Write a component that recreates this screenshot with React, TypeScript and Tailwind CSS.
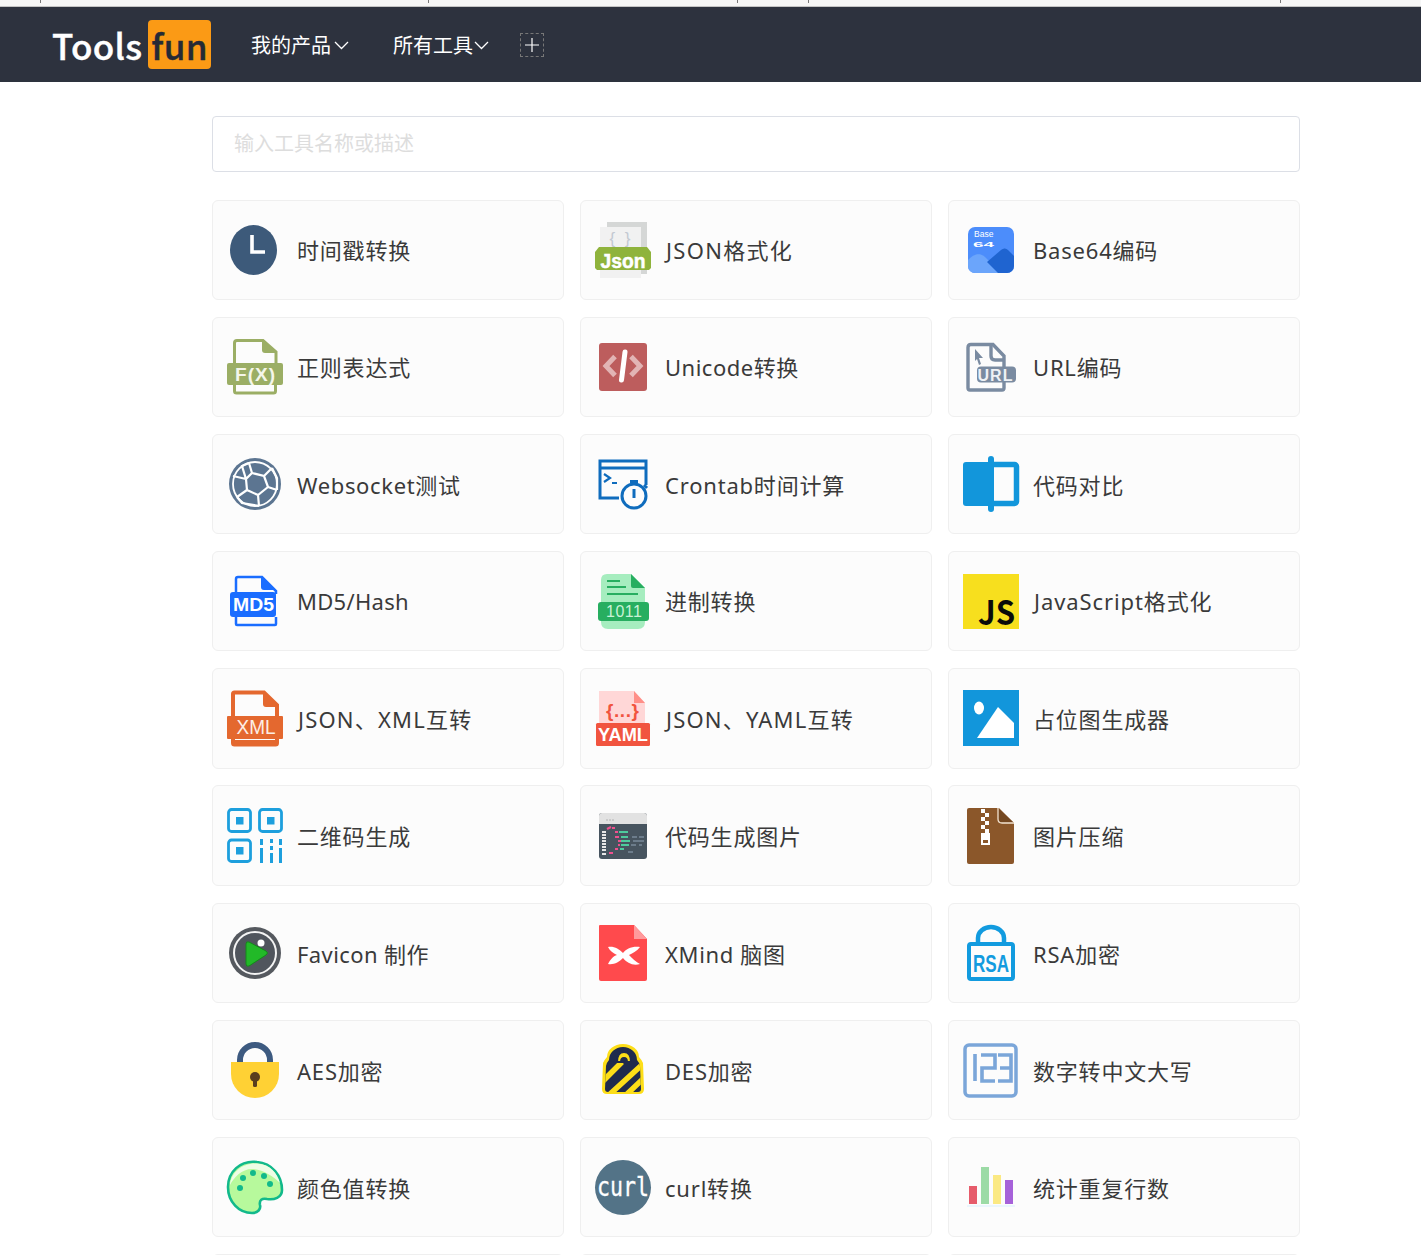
import React from "react";

const FONT = '"Noto Sans","Noto Sans CJK SC",sans-serif';
const Svg = ({ children }: { children: React.ReactNode }) => (
  <svg viewBox="0 0 56 56" width={56} height={56} className="shrink-0 overflow-visible" style={{ fontFamily: '"Liberation Sans",sans-serif' }}>
    {children}
  </svg>
);

const Clock = () => (
  <Svg>
    <ellipse cx="26.5" cy="28" rx="23.5" ry="25" fill="#3d5a7a" />
    <path d="M25 13v17h13" fill="none" stroke="#fff" strokeWidth="3.600" />
  </Svg>
);
const Json = () => (
  <Svg>
    <rect x="12" y="0" width="40" height="52" fill="#d5d7d6" />
    <rect x="5" y="5" width="41" height="51" fill="#f1f1f1" />
    <text x="25" y="22" textAnchor="middle" fontSize="17" fill="#c3c9d2" textLength="21">{"{ }"}</text>
    <path d="M4 25h48l4 5v16l-2 2H2l-2-2V30z" fill="#8fb33c" />
    <text x="28" y="45.500" textAnchor="middle" fontSize="20" fontWeight="700" fill="#fff" stroke="#fff" strokeWidth="0.500" textLength="45" lengthAdjust="spacingAndGlyphs">Json</text>
  </Svg>
);
const Base64 = () => (
  <Svg>
    <defs>
      <clipPath id="b64"><rect x="5" y="5" width="46" height="46" rx="7" /></clipPath>
    </defs>
    <g clipPath="url(#b64)">
      <rect x="5" y="5" width="46" height="46" fill="#4c8dfb" />
      <path d="M5 38c5-6 12-8 17-3l16 16H5z" fill="#6ba5fb" />
      <path d="M24 40l14-12c3-2 5-2 7 0l6 6v17H35z" fill="#1f64d0" />
    </g>
    <text x="11" y="15" fontSize="8.500" fill="#fff">Base</text>
    <text x="10" y="25" fontSize="8" fontWeight="700" fill="#fff" textLength="21" lengthAdjust="spacingAndGlyphs">64</text>
  </Svg>
);
const Regex = () => (
  <Svg>
    <path d="M7.500 24V4q0-2.500 2.500-2.500h26L49 13v11M7.500 46v6q0 2 2 2h37q2 0 2-2v-6" fill="none" stroke="#9bae65" strokeWidth="3" />
    <path d="M35 1v10q0 3 3 3h12z" fill="#9bae65" />
    <rect x="0" y="24" width="56" height="22" rx="2" fill="#9bae65" />
    <text x="28" y="42" textAnchor="middle" fontSize="19" fontWeight="700" fill="#f4f6ea" textLength="40">F(X)</text>
  </Svg>
);
const Unicode = () => (
  <Svg>
    <rect x="4" y="4" width="48" height="48" rx="3" fill="#bd5d5d" />
    <path d="M20 17.500L11 27l9 9.500M36 17.500L45 27l-9 9.500" fill="none" stroke="#e2b4b4" strokeWidth="5" />
    <path d="M30 13l-3.500 28" fill="none" stroke="#fff" strokeWidth="5" strokeLinecap="round" />
  </Svg>
);
const Url = () => (
  <Svg>
    <path d="M41 28V17L30 5.500H8q-3 0-3 3V49q0 2 2 2h32q2 0 2-2v-6" fill="none" stroke="#7a8ba1" strokeWidth="3.400" />
    <path d="M28 5v12q0 4 4 4h9" fill="none" stroke="#7a8ba1" strokeWidth="3.400" />
    <path d="M12 10l8 9-4 0 2 6-2 1-2-6-2 2z" fill="#7a8ba1" />
    <rect x="14" y="27.500" width="39" height="16" rx="4" fill="#7a8ba1" />
    <text x="32" y="42" textAnchor="middle" fontSize="16" fontWeight="700" fill="#eef1f5" textLength="35">URL</text>
  </Svg>
);
const Ws = () => (
  <Svg>
    <circle cx="28" cy="28" r="26" fill="#5c7591" />
    <circle cx="28" cy="28" r="22" fill="none" stroke="#fff" strokeWidth="1.800" />
    <path d="M25 17l12 3 4 11-10 8-11-5-1-11zM25 17l-3-10M37 20l8-8M41 31l9 3M31 39l1 11M20 34l-10 7M19 23l-13-3M22 7l-7 3 4 13M45 12l5 10v12M10 41l5 6 17 3" fill="none" stroke="#fff" strokeWidth="2.200" />
  </Svg>
);
const Cron = () => (
  <Svg>
    <path d="M24 42H5V5h46v24M5 12h46" fill="none" stroke="#0f6cbd" strokeWidth="3" />
    <path d="M9 18l6 4-6 4M17 27h5" fill="none" stroke="#0f6cbd" strokeWidth="2.200" />
    <circle cx="39" cy="40" r="12" fill="#fcfcfc" stroke="#0f6cbd" strokeWidth="3" />
    <path d="M35 25.500h8M39 25v3M39 33v9M49 29l3 3" fill="none" stroke="#0f6cbd" strokeWidth="3" />
  </Svg>
);
const Compare = () => (
  <Svg>
    <path d="M3 6h25v44H3q-3 0-3-3V9q0-3 3-3z" fill="#1296db" />
    <rect x="28" y="8.500" width="25.500" height="39" fill="none" stroke="#1296db" strokeWidth="5.500" rx="2" />
    <rect x="25" y="0" width="6" height="56" rx="3" fill="#1296db" />
  </Svg>
);
const Md5 = () => (
  <Svg>
    <g transform="translate(3,0)">
      <path d="M6 20V6q0-2 2-2h24l14 14v3M6 44v7q0 1 1 1h38q1 0 1-1v-7" fill="none" stroke="#1a6dff" strokeWidth="2.500" />
      <path d="M31 4v10q0 3 3 3h12z" fill="#1a6dff" />
      <rect x="0" y="19" width="46" height="25" rx="3" fill="#1a6dff" />
      <text x="23.500" y="38" textAnchor="middle" fontSize="18" fontWeight="700" fill="#fff" textLength="41" lengthAdjust="spacingAndGlyphs">MD5</text>
    </g>
  </Svg>
);
const Bin = () => (
  <Svg>
    <path d="M12 1h24l14 14v34q0 7-7 7H13q-7 0-7-7V7q0-6 6-6z" fill="#a6edbf" />
    <path d="M36 1l14 14H38q-2 0-2-2z" fill="#27ae60" />
    <path d="M12 8h13M12 14h19M12 21h31" stroke="#27ae60" strokeWidth="2" fill="none" />
    <rect x="3" y="29" width="51" height="19" rx="3" fill="#27ae60" />
    <text x="29" y="44" textAnchor="middle" fontSize="16" fill="#c8f2d6" textLength="36">1011</text>
  </Svg>
);
const Js = () => (
  <Svg>
    <rect x="0" y="1" width="56" height="55" fill="#f7df1e" />
    <text x="15" y="52" fontSize="34" fontWeight="700" fill="#0a0a0a" textLength="37" lengthAdjust="spacingAndGlyphs" style={{ fontFamily: '"Noto Sans CJK SC",sans-serif' }}>JS</text>
  </Svg>
);
const Xml = () => (
  <Svg>
    <path d="M6 26V4q0-1.500 1.500-1.500H37L50 15v11M6 48v5q0 1.500 1.500 1.500h41q1.500 0 1.500-1.500v-5" fill="none" stroke="#e4682f" strokeWidth="4" />
    <path d="M36 2v12q0 3 3 3h13z" fill="#e4682f" />
    <rect x="0" y="26" width="56" height="23" rx="1" fill="#e4682f" />
    <path d="M6 50h44v3H6z" fill="#e4682f" />
    <text x="29" y="44" textAnchor="middle" fontSize="20" fill="#fdeee5" textLength="39" lengthAdjust="spacingAndGlyphs">XML</text>
  </Svg>
);
const Yaml = () => (
  <Svg>
    <path d="M4 1h35l11 12v21H4z" fill="#ffd7d7" />
    <path d="M39 1l11 12H39z" fill="#ff8f88" />
    <text x="27.500" y="27" textAnchor="middle" fontSize="19" fontWeight="700" fill="#f1543f" textLength="33">{"{...}"}</text>
    <rect x="1" y="33" width="54" height="23" rx="1.500" fill="#f1543f" />
    <text x="28" y="51" textAnchor="middle" fontSize="19" fontWeight="700" fill="#fff" textLength="50" lengthAdjust="spacingAndGlyphs">YAML</text>
  </Svg>
);
const Placeholder = () => (
  <Svg>
    <rect x="0" y="0" width="56" height="56" fill="#1296db" />
    <ellipse cx="16" cy="18" rx="5" ry="6.500" fill="#fff" />
    <path d="M14 48l21-31 16 16v15z" fill="#fff" />
  </Svg>
);
const Qr = () => (
  <Svg>
    <g fill="none" stroke="#1d9fdd" strokeWidth="2.800">
      <rect x="1.500" y="1.500" width="22" height="22" rx="3" />
      <rect x="32.500" y="1.500" width="22" height="22" rx="3" />
      <rect x="1.500" y="32" width="22" height="21.500" rx="3" />
    </g>
    <g fill="#1d9fdd">
      <rect x="9" y="9" width="7.500" height="7.500" />
      <rect x="40" y="9" width="7.500" height="7.500" />
      <rect x="9" y="39" width="7.500" height="7.500" />
      <path d="M33 31h3v6h-3zM33 40h3v15h-3zM43 31h3v4h-3zM43 38h3v4h-3zM43 45h3v10h-3zM52 31h3v6h-3zM52 40h3v15h-3z" />
    </g>
  </Svg>
);
const CodeImg = () => (
  <Svg>
    <rect x="4" y="5" width="48" height="46" rx="3" fill="#47545f" />
    <path d="M4 16V8q0-3 3-3h42q3 0 3 3v8z" fill="#e2e2e2" />
    <path d="M11 12h2M14 12h2M17 12h2" stroke="#c4c4c4" strokeWidth="1.500" />
    <path d="M7 24h4M7 27h4M7 30h4M7 33h4M7 36h4M7 39h4M7 42h4M7 46h4" stroke="#e6e6e6" strokeWidth="1.800" />
    <path d="M12 21l4-2M17 20h3M20 24h3M20 29h4M23 33h3M23 37h2M20 41h3M14 45h4" stroke="#f0518f" strokeWidth="2" />
    <path d="M24 24h9M26 29h7M26 33h9M26 37h8M25 41h4" stroke="#4ecb9d" strokeWidth="2" />
    <path d="M37 29h5M44 29h5M38 33h11M36 37h5M44 37h3M33 44h5" stroke="#6c7c8b" strokeWidth="1.800" />
  </Svg>
);
const Zip = () => (
  <Svg>
    <path d="M6 0h30l15 15v39q0 2-2 2H6q-2 0-2-2V2q0-2 2-2z" fill="#8b572a" />
    <path d="M35 0v11q0 4 4 4h12" fill="#744720" stroke="#f3e3d0" strokeWidth="1.300" />
    <path d="M18 1h4v4h-4zM22 5h4v4h-4zM18 9h4v4h-4zM22 13h4v4h-4zM18 17h4v4h-4zM22 21h4v4h-4z" fill="#fff" />
    <rect x="18" y="25" width="9" height="12" fill="#fff" />
    <rect x="20" y="32" width="5" height="3" fill="#8b572a" />
  </Svg>
);
const Favicon = () => (
  <Svg>
    <circle cx="28" cy="28" r="26" fill="#55595f" />
    <circle cx="28" cy="28" r="21" fill="#50555d" stroke="#f4f4f4" strokeWidth="2" />
    <path d="M19 19q0-3 3-2l17 9q3 2 0 4L22 41q-3 1-3-2z" fill="#22b928" stroke="#148a1a" strokeWidth="1" />
    <circle cx="34" cy="18" r="3.500" fill="#fff" />
  </Svg>
);
const XMind = () => (
  <Svg>
    <path d="M5 0h34l13 14v40q0 2-2 2H6q-2 0-2-2V1q0-1 1-1z" fill="#ff4a4d" />
    <path d="M39 0l13 14H39z" fill="#ff9a9c" />
    <path d="M13 22c6-1 11 2 15 6 3-4 9-7 17-6-3 4-7 6-11 8 3 3 7 7 11 9-7 2-13-1-17-6-4 4-9 7-15 6 2-4 5-8 9-9-4-2-7-4-9-8z" fill="#fff" />
  </Svg>
);
const Rsa = () => (
  <Svg>
    <path d="M15 17v-4a13 11 0 0 1 26 0v4" fill="none" stroke="#129bdf" strokeWidth="4.500" />
    <rect x="6" y="19" width="44" height="35" rx="2" fill="#fcfcfc" stroke="#129bdf" strokeWidth="4" />
    <text x="28" y="47" textAnchor="middle" fontSize="23" fontWeight="700" fill="#129bdf" textLength="36" lengthAdjust="spacingAndGlyphs">RSA</text>
  </Svg>
);
const Aes = () => (
  <Svg>
    <path d="M13 22v-4a15 15 0 0 1 30 0v4" fill="none" stroke="#3d5a80" strokeWidth="6" />
    <path d="M4 20h48v12a24 24 0 0 1-24 24A24 24 0 0 1 4 32z" fill="#ffd134" />
    <circle cx="28" cy="35" r="5" fill="#5b3e1e" />
    <rect x="26" y="35" width="4" height="10" rx="1.500" fill="#5b3e1e" />
  </Svg>
);
const Des = () => (
  <Svg>
    <defs>
      <clipPath id="desb"><path d="M11 24q1-4 3-6a14 13 0 0 1 28 0q2 2 3 6l1 23q0 3-3 3H13q-3 0-3-3z" /></clipPath>
    </defs>
    <path d="M8 21q2-4 4-6a16 13 0 0 1 32 0q2 2 4 6l1 26q0 5-5 5H12q-5 0-5-5z" fill="#fdde18" />
    <path d="M11 24q1-4 3-6a14 13 0 0 1 28 0q2 2 3 6l1 23q0 3-3 3H13q-3 0-3-3z" fill="#202b4d" />
    <g clipPath="url(#desb)" stroke="#fdde18" strokeWidth="5.500" fill="none">
      <path d="M6 41L27 20M14 53L48 22M31 53L52 33" />
    </g>
    <path d="M22 20q0-10 7-10t7 10z" fill="#fdde18" stroke="#202b4d" strokeWidth="2" />
    <path d="M25 20q0-5 4-5t4 5z" fill="#202b4d" />
  </Svg>
);
const Num = () => (
  <Svg>
    <rect x="2" y="3" width="51" height="51" rx="4" fill="none" stroke="#7ba6d9" strokeWidth="3.500" />
    <path d="M12 12v27M18 13h14v13H19v13h13M35 13h13v26H35M37 26h11" fill="none" stroke="#7ba6d9" strokeWidth="3.600" />
  </Svg>
);
const Palette = () => (
  <Svg>
    <path d="M30 3C13 1 1 13 1 28c0 15 11 26 24 26 6 0 9-4 8-8-1-5 2-7 7-6 7 1 15-1 15-9C55 17 45 4 30 3z" fill="#b7f99c" stroke="#12b98b" strokeWidth="2.600" />
    <path d="M30 4.500C16 3.500 4 13 3 26c4-8 12-16 22-16 10 0 22 8 28 14C50 14 44 5.500 30 4.500z" fill="#eefde5" />
    <g fill="#12b98b">
      <circle cx="16" cy="19" r="3" /><circle cx="13" cy="29" r="3" /><circle cx="26" cy="14" r="3" /><circle cx="37" cy="17" r="3" /><circle cx="43" cy="25" r="3" />
    </g>
  </Svg>
);
const Curl = () => (
  <Svg>
    <ellipse cx="28" cy="28.500" rx="28" ry="27.500" fill="#537387" />
    <text x="28" y="37" textAnchor="middle" fontSize="27" fill="#fff" stroke="#fff" strokeWidth="0.300" textLength="52" lengthAdjust="spacingAndGlyphs" style={{ fontFamily: '"DejaVu Sans Mono",monospace' }}>curl</text>
  </Svg>
);
const Chart = () => (
  <Svg>
    <rect x="4" y="46" width="48" height="2" fill="#eaf6fd" />
    <rect x="6" y="27" width="8" height="18" fill="#e65c6b" />
    <rect x="18" y="8" width="8" height="37" fill="#9cdba6" />
    <rect x="30" y="16" width="8" height="29" fill="#fbe983" />
    <rect x="42" y="21" width="8" height="24" fill="#a661d9" />
  </Svg>
);

type Tool = { label: string; Icon: () => React.ReactElement; cls?: string };
const BASE = "tracking-[0.8px]";
const tools: Tool[] = [
  { label: "时间戳转换", Icon: Clock },
  { label: "JSON格式化", Icon: Json, cls: "tracking-[1.300px] pl-[1px]" },
  { label: "Base64编码", Icon: Base64 },
  { label: "正则表达式", Icon: Regex },
  { label: "Unicode转换", Icon: Unicode, cls: "tracking-[0.500px]" },
  { label: "URL编码", Icon: Url },
  { label: "Websocket测试", Icon: Ws, cls: "tracking-[0.650px]" },
  { label: "Crontab时间计算", Icon: Cron },
  { label: "代码对比", Icon: Compare },
  { label: "MD5/Hash", Icon: Md5, cls: "tracking-[0.300px]" },
  { label: "进制转换", Icon: Bin },
  { label: "JavaScript格式化", Icon: Js, cls: "tracking-[0.900px] pl-[1px]" },
  { label: "JSON、XML互转", Icon: Xml, cls: "tracking-[1.200px] pl-[1px]" },
  { label: "JSON、YAML互转", Icon: Yaml, cls: "tracking-[1.200px] pl-[1px]" },
  { label: "占位图生成器", Icon: Placeholder },
  { label: "二维码生成", Icon: Qr },
  { label: "代码生成图片", Icon: CodeImg },
  { label: "图片压缩", Icon: Zip },
  { label: "Favicon 制作", Icon: Favicon, cls: "tracking-[0.400px]" },
  { label: "XMind 脑图", Icon: XMind, cls: "tracking-[0.650px]" },
  { label: "RSA加密", Icon: Rsa },
  { label: "AES加密", Icon: Aes },
  { label: "DES加密", Icon: Des },
  { label: "数字转中文大写", Icon: Num },
  { label: "颜色值转换", Icon: Palette },
  { label: "curl转换", Icon: Curl },
  { label: "统计重复行数", Icon: Chart },
];

const rowOffset = [
  "mt-[1.500px]", "mt-[1.500px]", "mt-[1.500px]", "mt-[0.500px]", "mt-[1.500px]",
  "mt-[1.500px]", "mt-[3px]", "mt-[3px]", "mt-[3px]",
];

const Chevron = () => (
  <svg width="15" height="9" viewBox="0 0 15 9" className="ml-[3px] mt-[1px]">
    <path d="M1 1l6.500 6.500L14 1" fill="none" stroke="#fff" strokeWidth="1.300" />
  </svg>
);

export default function App() {
  return (
    <div className="relative h-[1255px] overflow-hidden bg-white" style={{ fontFamily: FONT }}>
      <div className="relative h-[7px] border-b border-[#c4c4c4] bg-[#f6f6f6]">
        <span className="absolute left-[40px] top-0 h-[3px] w-px bg-[#777]" />
        <span className="absolute left-[428px] top-0 h-[3px] w-px bg-[#777]" />
        <span className="absolute left-[737px] top-0 h-[3px] w-px bg-[#777]" />
        <span className="absolute left-[808px] top-0 h-[3px] w-px bg-[#777]" />
        <span className="absolute left-[1280px] top-0 h-[3px] w-px bg-[#777]" />
      </div>
      <header className="flex h-[75px] items-center bg-[#2d323e] pl-[52px] text-white">
        <div className="flex items-center text-[35px] font-medium leading-none tracking-[0.300px] [-webkit-text-stroke:0.4px]" style={{ fontFamily: '"Noto Sans CJK SC",sans-serif' }}>
          <span className="w-[90px] whitespace-nowrap">Tools</span>
          <span className="ml-[6px] flex h-[49px] w-[63px] items-center justify-center rounded-[4px] bg-[#fb9a15] text-[#252a35]">fun</span>
        </div>
        <nav className="ml-[40px] flex items-center text-[20px] leading-none">
          <span className="mt-[2px]">我的产品</span>
          <Chevron />
          <span className="ml-[44px] mt-[2px]">所有工具</span>
          <span className="-ml-[2px] flex"><Chevron /></span>
          <span className="ml-[31px] flex h-[24px] w-[24px] items-center justify-center border border-dashed border-[#777]">
            <svg width="14" height="14" viewBox="0 0 14 14"><path d="M7 0v14M0 7h14" stroke="#fff" strokeWidth="1.200" /></svg>
          </span>
        </nav>
      </header>
      <main className="ml-[212px] w-[1088px] pt-[34px]">
        <input
          readOnly
          placeholder="输入工具名称或描述"
          className="block h-[56px] w-full rounded-[4px] border border-[#dcdfe6] px-[21px] pb-[2px] text-[20px] outline-none placeholder:text-[#dddddd]"
        />
        <div className="mt-[28.050px] grid grid-cols-3 gap-x-[16px] gap-y-[16.900px]">
          {tools.map(({ label, Icon, cls }, i) => (
            <div key={label} className="flex h-[100.200px] items-center rounded-[6px] border border-[#efefef] bg-[#fcfcfc] pl-[14px]">
              <Icon />
              <span className={`ml-[14px] whitespace-nowrap text-[22px] text-[#3a3a3a] ${rowOffset[Math.floor(i / 3)]} ${cls ?? BASE}`}>{label}</span>
            </div>
          ))}
          <div className="h-[100.200px] rounded-[6px] border border-[#efefef] bg-[#fcfcfc]" />
          <div className="h-[100.200px] rounded-[6px] border border-[#efefef] bg-[#fcfcfc]" />
          <div className="h-[100.200px] rounded-[6px] border border-[#efefef] bg-[#fcfcfc]" />
        </div>
      </main>
    </div>
  );
}
